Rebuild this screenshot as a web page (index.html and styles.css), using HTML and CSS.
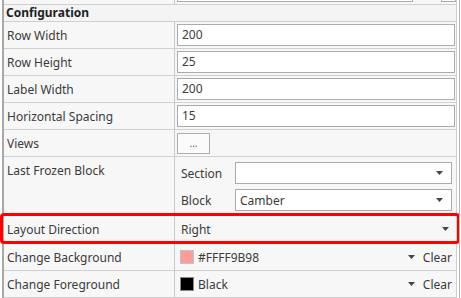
FILE: index.html
```html
<!DOCTYPE html>
<html lang="en">
<head>
<meta charset="UTF-8">
<title>Property Grid</title>
<link rel="stylesheet" href="styles.css">
</head>
<body>

<div class="frame">
  <div class="grid">
    <!-- row scrolled mostly out of view -->
    <div class="row cut">
      <div class="label">File Dialog Button</div>
      <div class="value">
        <div class="textbox short"></div>
        <div class="mini-btn"></div>
      </div>
    </div>

    <div class="category">Configuration</div>

    <div class="row">
      <div class="label">Row Width</div>
      <div class="value"><div class="textbox">200</div></div>
    </div>
    <div class="row">
      <div class="label">Row Height</div>
      <div class="value"><div class="textbox">25</div></div>
    </div>
    <div class="row">
      <div class="label">Label Width</div>
      <div class="value"><div class="textbox">200</div></div>
    </div>
    <div class="row">
      <div class="label">Horizontal Spacing</div>
      <div class="value"><div class="textbox">15</div></div>
    </div>
    <div class="row">
      <div class="label">Views</div>
      <div class="value"><button class="dots">...</button></div>
    </div>

    <div class="row tall">
      <div class="label top">Last Frozen Block</div>
      <div class="value stack">
        <div class="sub">
          <span class="sub-label">Section</span>
          <div class="combo"><span class="combo-text"></span><svg class="caret" width="7" height="4" viewBox="0 0 7 4"><polygon points="0,0 7,0 3.5,4"/></svg></div>
        </div>
        <div class="sub">
          <span class="sub-label">Block</span>
          <div class="combo"><span class="combo-text">Camber</span><svg class="caret" width="7" height="4" viewBox="0 0 7 4"><polygon points="0,0 7,0 3.5,4"/></svg></div>
        </div>
      </div>
    </div>

    <div class="row picked">
      <div class="label">Layout Direction</div>
      <div class="value flat">
        <span class="flat-text">Right</span>
        <svg class="caret" width="7" height="4" viewBox="0 0 7 4"><polygon points="0,0 7,0 3.5,4"/></svg>
      </div>
      <div class="mark"></div>
    </div>

    <div class="row">
      <div class="label">Change Background</div>
      <div class="value color">
        <span class="swatch pink"></span>
        <span class="color-text">#FFFF9B98</span>
        <svg class="caret" width="7" height="4" viewBox="0 0 7 4"><polygon points="0,0 7,0 3.5,4"/></svg>
        <span class="clear">Clear</span>
      </div>
    </div>
    <div class="row">
      <div class="label">Change Foreground</div>
      <div class="value color">
        <span class="swatch black"></span>
        <span class="color-text">Black</span>
        <svg class="caret" width="7" height="4" viewBox="0 0 7 4"><polygon points="0,0 7,0 3.5,4"/></svg>
        <span class="clear">Clear</span>
      </div>
    </div>
  </div>
</div>

</body>
</html>
```

FILE: styles.css
```css
body {
  margin: 0;
  background: #ffffff;
  font-family: "Noto Sans", "Open Sans", sans-serif;
  font-size: 12px;
  color: #3b3b3b;
  overflow: hidden;
}
.frame {
  width: 460px;
  box-sizing: border-box;
  border-right: 1px solid #b4b4b4;
  height: 298px;
  overflow: hidden;
}
.grid {
  width: 455px;
  margin-left: 2px;
  box-sizing: border-box;
  border-left: 2px solid #a9a9a9;
  border-right: 1px solid #cfcfcf;
  background: #f7f7f7;
}
.row {
  position: relative;
  display: grid;
  grid-template-columns: 171px 1fr;
  height: 27px;
  box-sizing: border-box;
  border-bottom: 1px solid #d0d0d0;
}
.row.cut {
  margin-top: -22px;
}
.row.tall {
  height: 58px;
}
.row.picked {
  height: 29px;
}
.label {
  display: flex;
  align-items: center;
  padding-left: 3px;
  border-right: 1px solid #c8c8c8;
  white-space: nowrap;
}
.label.top {
  align-items: flex-start;
  padding-top: 5px;
}
.value {
  display: flex;
  align-items: center;
  min-width: 0;
}
.category {
  height: 17px;
  box-sizing: border-box;
  border-bottom: 1px solid #d0d0d0;
  background: #f4f4f4;
  padding-left: 2px;
  font-weight: bold;
  line-height: 15px;
  color: #1e1e1e;
}

/* editors */
.textbox {
  flex: 1;
  height: 22px;
  box-sizing: border-box;
  margin: 0 1px 0 2px;
  padding-left: 4px;
  border: 1px solid #ababab;
  background: #ffffff;
  line-height: 20px;
}
.textbox.short {
  flex: 0 0 236px;
}
.mini-btn {
  width: 16px;
  height: 22px;
  box-sizing: border-box;
  margin-left: 27px;
  border: 1px solid #ababab;
  background: #fdfdfd;
}
.dots {
  width: 33px;
  height: 21px;
  margin-left: 2px;
  padding: 0;
  border: 1px solid #adadad;
  background: #fbfbfb;
  font-family: inherit;
  font-size: 10px;
  color: #555;
  line-height: 12px;
}
.stack {
  flex-direction: column;
  align-items: stretch;
  padding-top: 5px;
  gap: 5px;
}
.sub {
  display: flex;
  align-items: center;
  height: 22px;
}
.sub-label {
  width: 54px;
  padding-left: 6px;
  flex: none;
}
.combo {
  flex: 1;
  display: flex;
  align-items: center;
  height: 22px;
  box-sizing: border-box;
  margin-right: 4px;
  padding: 0 8px 0 4px;
  border: 1px solid #ababab;
  background: #ffffff;
}
.combo-text,
.flat-text,
.color-text {
  flex: 1;
}
.caret {
  flex: none;
  fill: #444444;
}
.flat {
  padding: 0 7px 0 6px;
}
.color {
  padding: 0 4px 0 5px;
}
.swatch {
  width: 14px;
  height: 14px;
  box-sizing: border-box;
  margin-right: 4px;
  border: 1px solid #c4c4c4;
}
.swatch.pink {
  background: #ff9b98;
}
.swatch.black {
  background: #000000;
  border-color: #8a8a8a;
}
.clear {
  margin-left: 8px;
}

/* red highlight drawn over the selected row */
.mark {
  position: absolute;
  left: -4px;
  top: -2px;
  width: 460px;
  height: 31px;
  box-sizing: border-box;
  border: 3px solid #ff0000;
  border-radius: 4px;
  pointer-events: none;
}
```
